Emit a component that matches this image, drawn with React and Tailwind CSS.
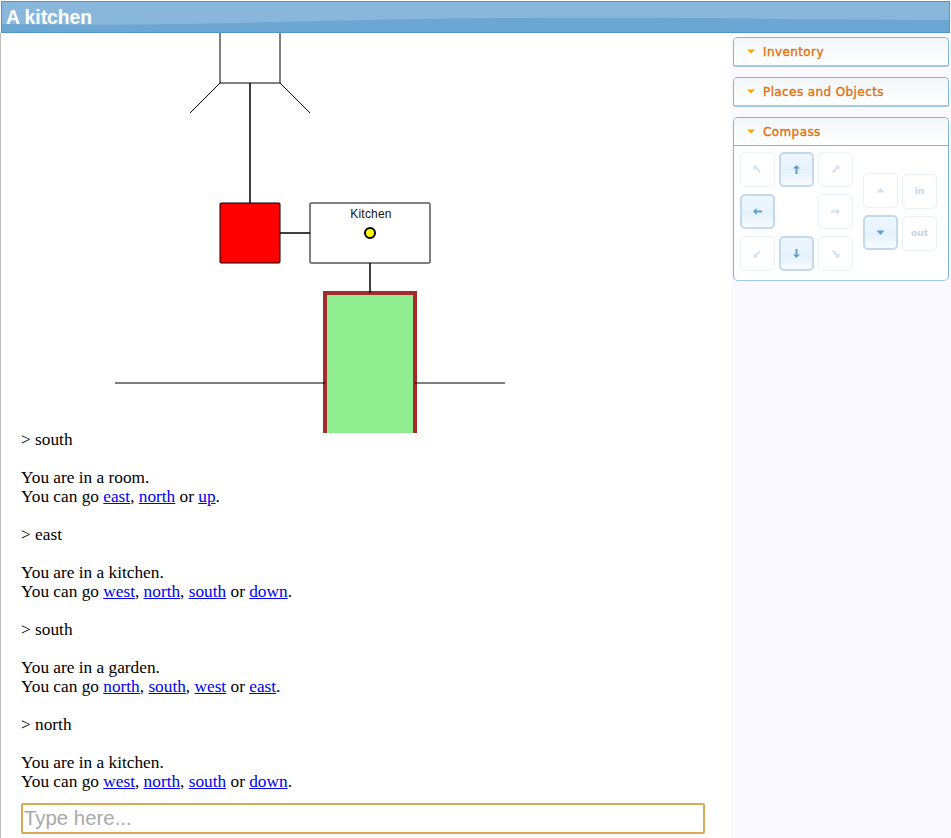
const log = [
  { cmd: "south", room: "a room", exits: ["east", "north", "up"] },
  { cmd: "east", room: "a kitchen", exits: ["west", "north", "south", "down"] },
  { cmd: "south", room: "a garden", exits: ["north", "south", "west", "east"] },
  { cmd: "north", room: "a kitchen", exits: ["west", "north", "south", "down"] },
];

function Exits({ exits }) {
  return exits.map((e, i) => (
    <span key={i}>
      <a href="#" className="text-[#0000ee] underline">{e}</a>
      {i < exits.length - 2 ? ", " : i === exits.length - 2 ? " or " : "."}
    </span>
  ));
}

function GameMap() {
  const links = "M250 83 V203 M280 233 H310 M370 263 V293";
  return (
    <svg width="730" height="400" viewBox="1 33 730 400" className="block shrink-0">
      {/* room above */}
      <rect x="220" y="23" width="60" height="60" fill="#fff" stroke="#000" />
      <path d="M220 83 L190 113 M280 83 L310 113" stroke="#000" fill="none" shapeRendering="crispEdges" />
      {/* current room */}
      <rect x="220" y="203" width="60" height="60" rx="1" fill="#ff0000" stroke="#000" />
      {/* kitchen */}
      <rect x="310" y="203" width="120" height="60" rx="1" fill="#fff" stroke="#000" />
      <text x="371" y="218" textAnchor="middle" fontSize="12" letterSpacing="0.2" fill="#111" fontFamily="'Liberation Sans', sans-serif">Kitchen</text>
      <circle cx="370" cy="233" r="5" fill="#ffff00" stroke="#000" strokeWidth="2" />
      {/* garden */}
      <rect x="325" y="293" width="90" height="150" fill="#90ee90" stroke="#a52a2a" strokeWidth="4" />
      <path d="M115 383 H325 M415 383 H505" stroke="#000" fill="none" />
      {/* links are drawn twice in the map, so they come out darker */}
      <path d={links} stroke="#000" fill="none" />
      <path d={links} stroke="#000" fill="none" />
    </svg>
  );
}

function Caret() {
  return (
    <svg width="8" height="5" viewBox="0 0 8 5" className="shrink-0">
      <path d="M0 0.5 H8 L4 4.5 Z" fill="#f6a800" />
    </svg>
  );
}

function PanelHead({ title }) {
  return (
    <div className="flex items-center gap-[8px] pl-[13px] h-[27px] bg-gradient-to-b from-[#f1f6f8] to-white">
      <Caret />
      <span className="text-[12px] tracking-[0.4px] text-[#e0700c] [-webkit-text-stroke:0.35px_#e0700c] [font-family:'DejaVu_Sans',sans-serif]">{title}</span>
    </div>
  );
}

function Panel({ title }) {
  return (
    <div className="mx-[2px] rounded-t-[5px] rounded-b-[2px] border border-[#7eb4e2] border-b-2 border-b-[#a3c8e8] overflow-hidden">
      <PanelHead title={title} />
    </div>
  );
}

function Arrow({ d, on }) {
  return (
    <svg width="11" height="11" viewBox="0 0 11 11">
      <path d={d} fill={on ? "#5f9fcf" : "#cfe2f2"} />
    </svg>
  );
}

const arrows = {
  nw: "M1.5 1.5 H6 L4.6 3 L9 7.6 L7.6 9 L3.2 4.4 L1.5 6 Z",
  n: "M5.5 1 L9 4.6 H6.5 V10 H4.5 V4.6 H2 Z",
  ne: "M9.5 1.5 H5 L6.4 3 L2 7.6 L3.4 9 L7.8 4.4 L9.5 6 Z",
  w: "M1 5.5 L4.6 2 V4.5 H10 V6.5 H4.6 V9 Z",
  e: "M10 5.5 L6.4 2 V4.5 H1 V6.5 H6.4 V9 Z",
  sw: "M1.5 9.5 H6 L4.6 8 L9 3.4 L7.6 2 L3.2 6.6 L1.5 5 Z",
  s: "M5.5 10 L9 6.4 H6.5 V1 H4.5 V6.4 H2 Z",
  se: "M9.5 9.5 H5 L6.4 8 L2 3.4 L3.4 2 L7.8 6.6 L9.5 5 Z",
  up: "M5.5 3 L9.5 7.5 H1.5 Z",
  down: "M5.5 8 L9.5 3.5 H1.5 Z",
};

function CompassBtn({ on, children }) {
  return (
    <div
      className={
        on
          ? "w-[35px] h-[35px] flex items-center justify-center rounded-[5px] border-2 border-[#c3d9ec] bg-[linear-gradient(#eef6fe_0%,#e8f3fc_48%,#e3f0fb_50%,#f7fbff_100%)]"
          : "w-[35px] h-[35px] flex items-center justify-center rounded-[5px] border border-[#e9f0f8] bg-white"
      }
    >
      {children}
    </div>
  );
}

function TextBtn({ label }) {
  return (
    <CompassBtn>
      <span className="text-[9px] font-bold text-[#c3d5e6] [font-family:'DejaVu_Sans',sans-serif]">{label}</span>
    </CompassBtn>
  );
}

function Compass() {
  const grid = [
    ["nw", false], ["n", true], ["ne", false],
    ["w", true], null, ["e", false],
    ["sw", false], ["s", true], ["se", false],
  ];
  return (
    <div className="mx-[2px] h-[164px] rounded-t-[5px] rounded-b-[5px] border border-[#7eb4e2] border-b-[#a3c8e8] bg-white overflow-hidden">
      <div className="border-b border-[#7eb4e2]">
        <PanelHead title="Compass" />
      </div>
      <div className="flex pt-[6px] pl-[6px]">
        <div className="grid grid-cols-[35px_35px_35px] gap-x-[4px] gap-y-[7px]">
          {grid.map((c, i) =>
            c ? (
              <CompassBtn key={i} on={c[1]}>
                <Arrow d={arrows[c[0]]} on={c[1]} />
              </CompassBtn>
            ) : (
              <div key={i} />
            )
          )}
        </div>
        <div className="flex flex-col gap-y-[7px] ml-[10px] mt-[21px]">
          <CompassBtn><Arrow d={arrows.up} /></CompassBtn>
          <CompassBtn on><Arrow d={arrows.down} on /></CompassBtn>
        </div>
        <div className="flex flex-col gap-y-[7px] ml-[4px] mt-[22px]">
          <TextBtn label="in" />
          <TextBtn label="out" />
        </div>
      </div>
    </div>
  );
}

export default function App() {
  return (
    <div className="w-[951px] h-[838px] overflow-hidden flex flex-col bg-white">
      {/* Title bar */}
      <div className="relative h-[32px] shrink-0 mx-px mt-px border border-[#4d95d2] bg-[#6ca6d2] overflow-hidden">
        <svg className="absolute inset-0" width="949" height="30" viewBox="0 0 949 30" preserveAspectRatio="none">
          <path d="M0 0 H949 V18 C800 18 700 15 520 16 C300 17 200 25 0 22 Z" fill="#89b7dc" />
        </svg>
        <h1 className="relative pl-[4px] pt-[1px] text-[19.3px] leading-[29px] font-bold text-white [font-family:'Liberation_Sans',sans-serif]">A kitchen</h1>
      </div>

      <div className="flex flex-1 min-h-0">
        {/* Main column */}
        <div className="w-[731px] shrink-0 flex flex-col border-l border-[#bdbdbd]">
          <GameMap />
          <div className="-mt-[3px] pl-[20px] text-[17.3px] leading-[19px] text-black [font-family:'Liberation_Serif',serif]">
            {log.map((entry, i) => (
              <div key={i} className={i < log.length - 1 ? "mb-[19px]" : ""}>
                <p className="mb-[19px]">&gt; {entry.cmd}</p>
                <p>You are in {entry.room}.</p>
                <p>You can go <Exits exits={entry.exits} /></p>
              </div>
            ))}
          </div>
          <div className="pl-[20px] pt-[12px]">
            <input
              readOnly
              placeholder="Type here..."
              className="w-[684px] h-[31px] px-[1px] rounded-[2px] border-2 border-[#d9a955] bg-white text-[20.4px] outline-none placeholder:text-[#a9a9a9] [font-family:'Liberation_Sans',sans-serif]"
            />
          </div>
        </div>

        {/* Sidebar */}
        <div className="flex-1 flex flex-col gap-[10px] pt-[4px] bg-[#f9f9ff]">
          <Panel title="Inventory" />
          <Panel title="Places and Objects" />
          <Compass />
        </div>
      </div>
    </div>
  );
}
